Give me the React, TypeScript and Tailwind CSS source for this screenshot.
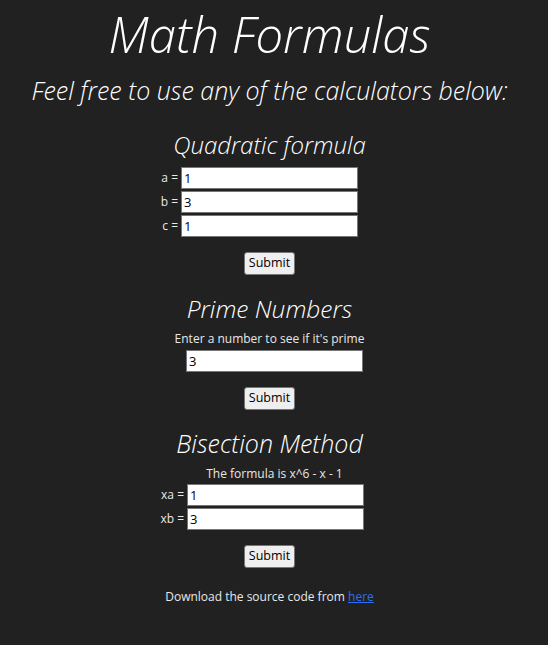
const font = { fontFamily: '"Open Sans", "Noto Sans", sans-serif' };

function Field({ label, value, shift = "" }: { label: string; value: string; shift?: string }) {
  return (
    <div className={`grid grid-cols-[1fr_auto_1fr] items-center h-6 ${shift}`}>
      <span className="text-right pr-[3px] text-[12px] text-[#e8e8e8]">{label}</span>
      <input
        defaultValue={value}
        className="w-[177px] h-[22px] bg-white border border-[#767676] px-[2px] text-[13px] text-black outline-none"
      />
      <span />
    </div>
  );
}

function SubmitButton() {
  return (
    <div className="flex justify-center">
      <button className="h-[23px] px-[4px] bg-[#efefef] border border-[#767676] rounded-[3px] text-[12.5px] text-black">
        Submit
      </button>
    </div>
  );
}

export default function App() {
  return (
    <div style={font} className="min-h-[645px] flex flex-col bg-[#212121] text-white text-center pr-[9px]">
      <h1 className="text-[49px] leading-[68px] font-light italic">Math Formulas</h1>
      <h2 className="text-[25px] leading-[34px] font-light italic mt-[5px]">
        Feel free to use any of the calculators below:
      </h2>

      <h3 className="text-[24px] leading-[32px] font-light italic mt-[22px]">Quadratic formula</h3>
      <div className="mt-[5px] flex flex-col">
        <Field label="a =" value="1" />
        <Field label="b =" value="3" />
        <Field label="c =" value="1" />
      </div>
      <div className="mt-[14px]">
        <SubmitButton />
      </div>

      <h3 className="text-[24.5px] leading-[34px] font-light italic mt-[17px]">Prime Numbers</h3>
      <p className="text-[12px] leading-[18px] text-[#e8e8e8] mt-[4px]">Enter a number to see if it's prime</p>
      <div className="flex justify-center mt-[2px] pl-[10px]">
        <input
          defaultValue="3"
          className="w-[177px] h-[22px] bg-white border border-[#767676] px-[2px] text-[13px] text-black outline-none"
        />
      </div>
      <div className="mt-[15px]">
        <SubmitButton />
      </div>

      <h3 className="text-[25px] leading-[34px] font-light italic mt-[16px]">Bisection Method</h3>
      <p className="text-[12px] leading-[18px] text-[#e8e8e8] mt-[5px] pl-[10px]">The formula is x^6 - x - 1</p>
      <div className="flex flex-col">
        <Field label="xa =" value="1" shift="pl-[12px]" />
        <Field label="xb =" value="3" shift="pl-[12px]" />
      </div>
      <div className="mt-[14px]">
        <SubmitButton />
      </div>

      <p className="text-[12px] leading-[18px] text-[#e8e8e8] mt-[20px]">
        Download the source code from{" "}
        <a href="#" className="text-[#2a6ff5] underline">
          here
        </a>
      </p>
    </div>
  );
}
